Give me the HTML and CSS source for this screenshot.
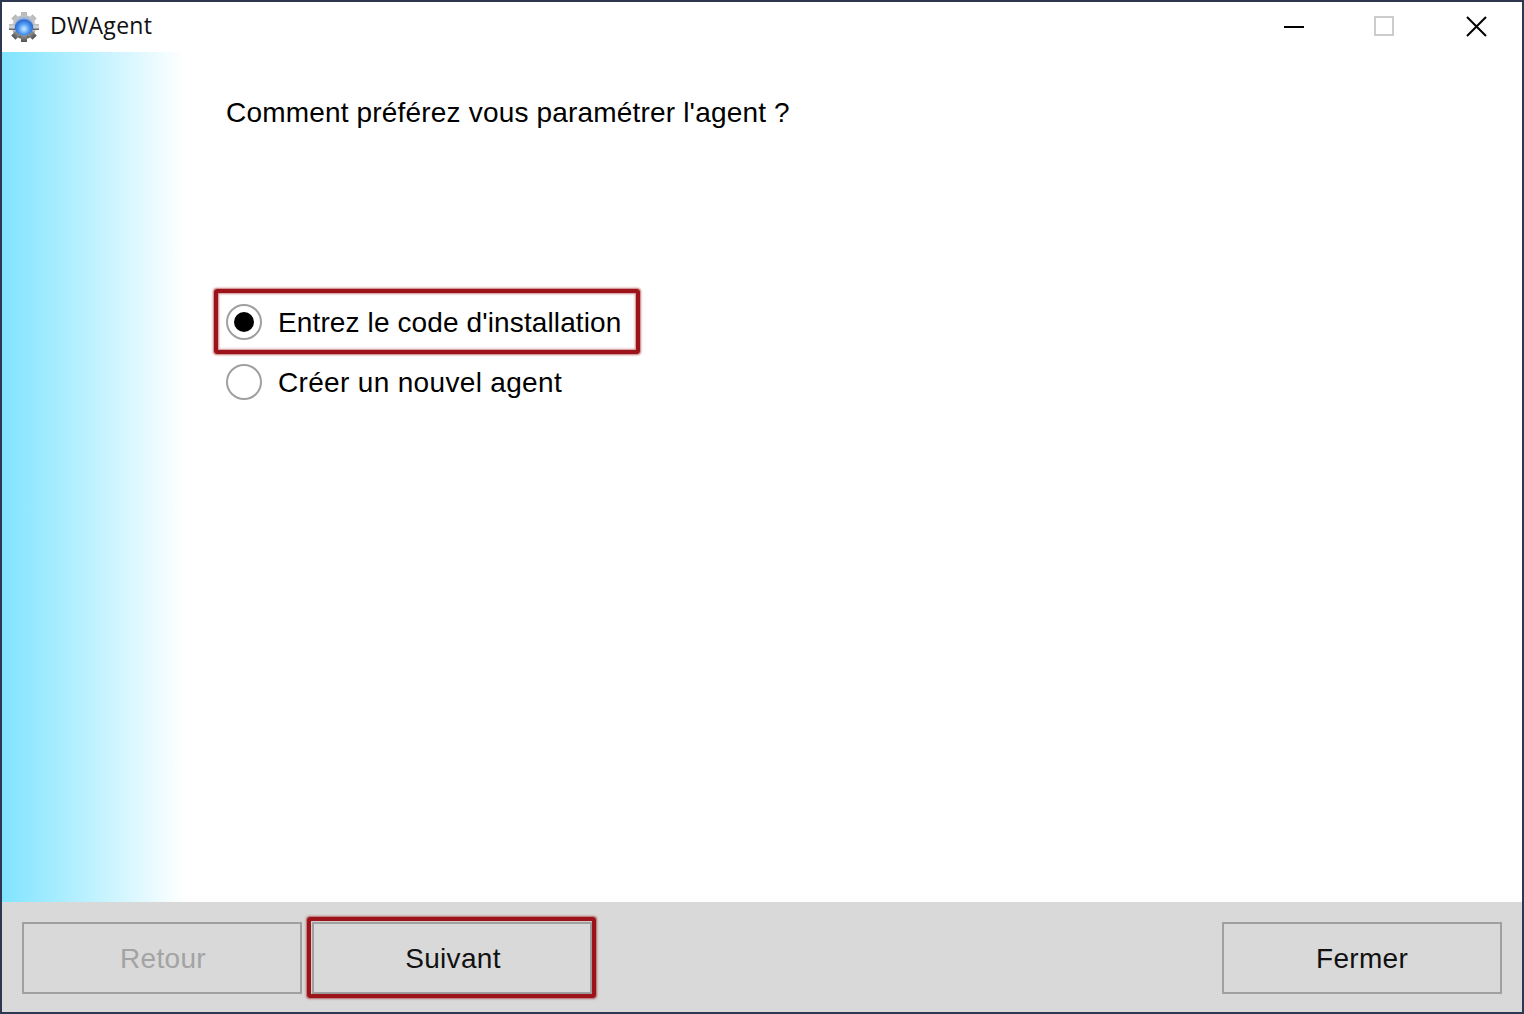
FILE: index.html
```html
<!DOCTYPE html>
<html lang="fr">
  <head>
    <meta charset="UTF-8" />
    <title>DWAgent</title>
    <link rel="stylesheet" href="styles.css">
  </head>
  <body>
    <div class="window">
      <div class="titlebar">
        <svg class="app-icon" width="32" height="32" viewBox="0 0 32 32">
          <defs>
            <radialGradient id="core" cx="50%" cy="65%" r="55%">
              <stop offset="0" stop-color="#cfeeff" />
              <stop offset="0.5" stop-color="#4f9af4" />
              <stop offset="0.85" stop-color="#2f6cd0" />
              <stop offset="1" stop-color="#a0b6d8" />
            </radialGradient>
            <linearGradient id="steel" x1="0" y1="0" x2="0" y2="1">
              <stop offset="0" stop-color="#b8b8b8" />
              <stop offset="0.55" stop-color="#dcdcdc" />
              <stop offset="1" stop-color="#505050" />
            </linearGradient>
            <filter id="soft">
              <feGaussianBlur stdDeviation="0.6" />
            </filter>
          </defs>
          <g filter="url(#soft)">
            <circle cx="16" cy="16" r="12" fill="url(#steel)" />
            <g fill="url(#steel)">
              <rect x="13" y="1" width="6" height="30" />
              <rect x="1" y="13" width="30" height="6" />
              <rect x="13" y="1" width="6" height="30" transform="rotate(45 16 16)" />
              <rect x="13" y="1" width="6" height="30" transform="rotate(-45 16 16)" />
            </g>
            <circle cx="16" cy="15" r="9.5" fill="url(#core)" />
          </g>
        </svg>
        <span class="app-name">DWAgent</span>
        <div class="window-controls">
          <svg class="control" width="92" height="50" viewBox="0 0 92 50">
            <path d="M36 25h20" stroke="#000" stroke-width="2" />
          </svg>
          <svg class="control" width="90" height="50" viewBox="0 0 90 50">
            <rect x="35" y="15" width="18" height="18" fill="none" stroke="#ccc" stroke-width="2" />
          </svg>
          <svg class="control" width="92" height="50" viewBox="0 0 92 50">
            <path d="M37 15l19 19M56 15l-19 19" stroke="#000" stroke-width="2" />
          </svg>
        </div>
      </div>

      <div class="content">
        <div class="side-gradient"></div>
        <div class="main">
          <p class="question">Comment préférez vous paramétrer l'agent ?</p>
          <div class="options">
            <label class="option option-marked">
              <span class="radio radio-on"></span>
              <span class="label-code">Entrez le code d'installation</span>
            </label>
            <label class="option">
              <span class="radio"></span>
              <span class="label-new">Créer un nouvel agent</span>
            </label>
          </div>
        </div>
      </div>

      <div class="footer">
        <button class="btn" disabled>Retour</button>
        <button class="btn btn-marked">Suivant</button>
        <button class="btn btn-close">Fermer</button>
      </div>
    </div>
  </body>
</html>
```

FILE: styles.css
```css
html,
body {
  margin: 0;
  height: 100%;
}

body {
  font-family: "Liberation Sans", Arial, sans-serif;
  background: #fff;
  color: #000;
}

.window {
  box-sizing: border-box;
  width: 1524px;
  height: 1014px;
  border: 2px solid #2d3750;
  display: flex;
  flex-direction: column;
  overflow: hidden;
}

.titlebar {
  height: 50px;
  flex: none;
  display: flex;
  align-items: center;
  padding-left: 6px;
  background: #fff;
}

.app-icon {
  flex: none;
}

.app-name {
  margin: -5px 0 0 10px;
  font-family: "Open Sans", sans-serif;
  font-size: 23px;
  letter-spacing: 0.3px;
  color: #111;
}

.window-controls {
  margin-left: auto;
  display: flex;
}

.control {
  display: block;
}

.content {
  flex: 1;
  display: flex;
  min-height: 0;
}

.side-gradient {
  width: 182px;
  flex: none;
  background: linear-gradient(to right, #80e4ff, #fff);
}

.main {
  flex: 1;
  padding: 45px 0 0 42px;
}

.question {
  margin: 0;
  font-size: 28px;
  line-height: 32px;
  letter-spacing: 0.18px;
}

.options {
  margin-top: 163px;
  display: flex;
  flex-direction: column;
}

.option {
  height: 60px;
  display: flex;
  align-items: center;
  gap: 16px;
  font-size: 28px;
  position: relative;
}

.label-code,
.label-new {
  padding-top: 2px;
}

.label-code {
  letter-spacing: 0.12px;
}

.label-new {
  letter-spacing: 0.33px;
}

.option-marked {
  width: 396px;
}

/* red annotation drawn on top of the screenshot */
.option-marked::after {
  content: "";
  position: absolute;
  left: -12px;
  right: -18px;
  top: -3px;
  bottom: -2px;
  border: 4px solid #9c1419;
  border-radius: 3px;
  box-shadow: 0 0 2px 1px rgba(156, 20, 25, 0.6), inset 0 0 2px 1px rgba(156, 20, 25, 0.5);
}

.radio {
  box-sizing: border-box;
  width: 36px;
  height: 36px;
  flex: none;
  border: 2px solid #a0a0a0;
  border-radius: 50%;
  background: #fff;
  display: flex;
  align-items: center;
  justify-content: center;
}

.radio-on::before {
  content: "";
  width: 20px;
  height: 20px;
  border-radius: 50%;
  background: #000;
}

.footer {
  height: 110px;
  flex: none;
  box-sizing: border-box;
  padding: 20px 20px 18px;
  background: #d9d9d9;
  display: flex;
  gap: 10px;
}

.btn {
  box-sizing: border-box;
  width: 280px;
  height: 72px;
  padding: 2px 0 0 2px;
  border: 2px solid #a0a0a0;
  border-radius: 0;
  background: #d9d9d9;
  color: #111;
  font-family: inherit;
  font-size: 28px;
  letter-spacing: 0.3px;
  position: relative;
}

.btn:disabled {
  color: #a3a3a3;
}

.btn-marked::after {
  content: "";
  position: absolute;
  left: -7px;
  right: -6px;
  top: -7px;
  bottom: -6px;
  border: 4px solid #9c1419;
  border-radius: 3px;
  box-shadow: 0 0 2px 1px rgba(156, 20, 25, 0.6), inset 0 0 1px rgba(156, 20, 25, 0.5);
}

.btn-close {
  margin-left: auto;
  padding-left: 0;
}
```
